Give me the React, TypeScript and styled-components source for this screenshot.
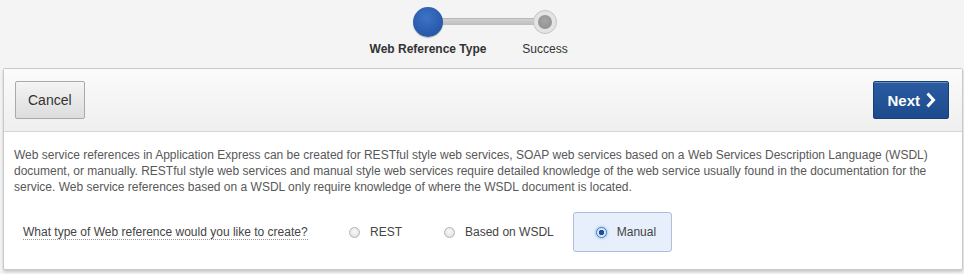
import React, { useState } from 'react';
import styled, { createGlobalStyle } from 'styled-components';

const GlobalStyle = createGlobalStyle`
  html, body {
    margin: 0;
    padding: 0;
    background: #f4f4f4;
    font-family: "Liberation Sans", Arial, Helvetica, sans-serif;
  }
`;

const Page = styled.div`
  width: 964px;
  height: 274px;
  overflow: hidden;
  box-sizing: border-box;
`;

const Wizard = styled.div`
  height: 68px;
  display: flex;
  justify-content: center;
  padding-left: 9px;
  box-sizing: border-box;
`;

const Steps = styled.div`
  display: grid;
  grid-template-columns: 117px 117px;
  position: relative;
`;

const Connector = styled.div`
  position: absolute;
  left: 58px;
  width: 117px;
  top: 18px;
  height: 7px;
  border-radius: 3px;
  background: linear-gradient(#d2d2d2, #bdbdbd);
  border-top: 1px solid #b8b8b8;
  box-sizing: border-box;
`;

const Step = styled.div`
  display: flex;
  flex-direction: column;
  align-items: center;
  position: relative;
  z-index: 1;
`;

const Marker = styled.div`
  height: 44px;
  display: flex;
  align-items: center;
  justify-content: center;
`;

const Current = styled.div`
  width: 30px;
  height: 30px;
  border-radius: 50%;
  background: radial-gradient(circle at 45% 35%, #3d72c4 0%, #2a5cae 60%, #214c94 100%);
  box-shadow: 0 1px 1px rgba(0, 0, 0, 0.25);
`;

const Pending = styled.div`
  width: 24px;
  height: 24px;
  border-radius: 50%;
  background: #e4e4e4;
  border: 1px solid #c4c4c4;
  box-sizing: border-box;
  display: flex;
  align-items: center;
  justify-content: center;

  &::after {
    content: '';
    width: 14px;
    height: 14px;
    border-radius: 50%;
    background: radial-gradient(circle at 50% 40%, #a6a6a6, #8c8c8c);
  }
`;

const StepLabel = styled.div<{ $active?: boolean }>`
  margin-top: -2px;
  font-size: 12px;
  line-height: 14px;
  color: #333;
  font-weight: ${(p) => (p.$active ? 'bold' : 'normal')};
  white-space: nowrap;
`;

const Panel = styled.div`
  margin: 0 1px 0 3px;
  border: 1px solid #c9c9c9;
  border-radius: 2px;
  background: #fff;
  box-shadow: 0 2px 3px rgba(0, 0, 0, 0.18);
`;

const Header = styled.div`
  height: 62px;
  display: flex;
  align-items: center;
  justify-content: space-between;
  padding: 0 13px 0 11px;
  background: linear-gradient(#fbfbfb, #efefef);
  border-bottom: 1px solid #d6d6d6;
`;

const Button = styled.button<{ $primary?: boolean }>`
  height: 38px;
  padding: 0 12px 0 ${(p) => (p.$primary ? '13px' : '12px')};
  border-radius: 2px;
  font-family: inherit;
  cursor: pointer;
  display: flex;
  align-items: center;
  gap: 5px;
  font-size: ${(p) => (p.$primary ? '15px' : '14px')};
  font-weight: ${(p) => (p.$primary ? 'bold' : 'normal')};
  color: ${(p) => (p.$primary ? '#fff' : '#333')};
  border: 1px solid ${(p) => (p.$primary ? '#173e77' : '#a9a9a9')};
  background: ${(p) =>
    p.$primary
      ? 'linear-gradient(#2b5ba2, #1c4a8c)'
      : 'linear-gradient(#f4f4f4, #dddddd)'};
  box-shadow: inset 0 1px 0 rgba(255, 255, 255, 0.3);
`;

const Body = styled.div`
  padding: 15px 13px 0 10px;
`;

const Intro = styled.p`
  margin: 0;
  font-size: 12px;
  line-height: 16px;
  color: #585858;
`;

const Question = styled.div`
  display: flex;
  align-items: center;
  height: 40px;
  margin-top: 17px;
  padding-bottom: 17px;
`;

const QuestionLabel = styled.span`
  margin-left: 9px;
  width: 303px;
  font-size: 12px;
  color: #444;
  & > span {
    border-bottom: 1px dotted #999;
  }
`;

const Option = styled.label<{ $checked?: boolean }>`
  display: flex;
  align-items: center;
  gap: 10px;
  height: 40px;
  box-sizing: border-box;
  font-size: 12px;
  color: #444;
  cursor: pointer;
  padding: 0 ${(p) => (p.$checked ? '15px' : '18px')} 0 22px;
  border-radius: 3px;
  border: 1px solid ${(p) => (p.$checked ? '#aebfd6' : 'transparent')};
  background: ${(p) => (p.$checked ? '#e6effb' : 'transparent')};
`;

const RadioDot = styled.span<{ $checked?: boolean }>`
  width: 11px;
  height: 11px;
  border-radius: 50%;
  box-sizing: border-box;
  border: 1px solid ${(p) => (p.$checked ? '#3f79b8' : '#b4b4b4')};
  background: ${(p) =>
    p.$checked
      ? 'radial-gradient(circle, #1f4f94 0 2.5px, #d8e8f8 3px)'
      : 'radial-gradient(circle at 50% 40%, #fafafa, #dadada)'};
  box-shadow: ${(p) => (p.$checked ? '0 0 3px #6fa6e8' : 'none')};
`;

const Chevron = () => (
  <svg width="11" height="16" viewBox="0 0 11 16">
    <path d="M2.5 1.5 L8.5 8 L2.5 14.5" fill="none" stroke="#fff" strokeWidth="3" />
  </svg>
);

const options = ['REST', 'Based on WSDL', 'Manual'];

const App: React.FC = () => {
  const [choice, setChoice] = useState('Manual');
  return (
    <Page>
      <GlobalStyle />
      <Wizard>
        <Steps>
          <Connector />
          <Step>
            <Marker>
              <Current />
            </Marker>
            <StepLabel $active>Web Reference Type</StepLabel>
          </Step>
          <Step>
            <Marker>
              <Pending />
            </Marker>
            <StepLabel>Success</StepLabel>
          </Step>
        </Steps>
      </Wizard>
      <Panel>
        <Header>
          <Button>Cancel</Button>
          <Button $primary>
            Next <Chevron />
          </Button>
        </Header>
        <Body>
          <Intro>
            Web service references in Application Express can be created for RESTful style web services, SOAP web
            services based on a Web Services Description Language (WSDL) document, or manually. RESTful style web
            services and manual style web services require detailed knowledge of the web service usually found in the
            documentation for the service. Web service references based on a WSDL only require knowledge of where the
            WSDL document is located.
          </Intro>
          <Question>
            <QuestionLabel>
              <span>What type of Web reference would you like to create?</span>
            </QuestionLabel>
            {options.map((o) => (
              <Option key={o} $checked={choice === o} onClick={() => setChoice(o)}>
                <RadioDot $checked={choice === o} />
                {o}
              </Option>
            ))}
          </Question>
        </Body>
      </Panel>
    </Page>
  );
};

export default App;
